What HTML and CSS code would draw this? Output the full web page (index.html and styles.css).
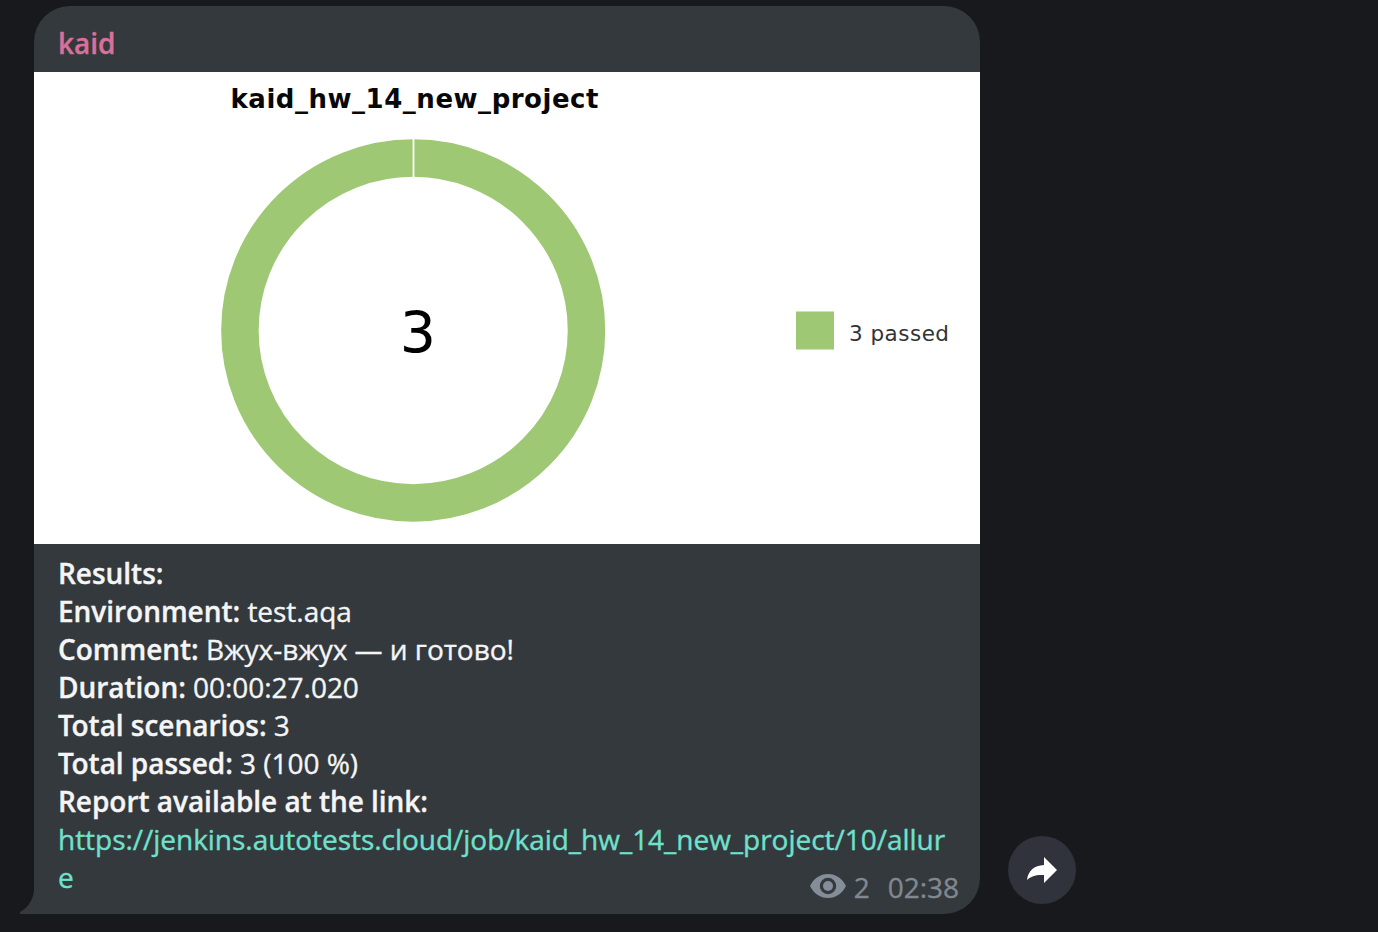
FILE: index.html
```html
<!DOCTYPE html>
<html lang="en">
<head>
<meta charset="utf-8">
<title>kaid</title>
<link rel="stylesheet" href="styles.css">
</head>
<body>
<main class="chat">
  <article class="message">
    <header class="sender">kaid</header>
    <svg class="chart" viewBox="34 72 946 472" role="img" aria-label="3 passed">
      <text class="chart-title" x="230.500" y="107.500" textLength="368">kaid_hw_14_new_project</text>
      <ellipse class="ring" cx="413.200" cy="330.500" rx="173.300" ry="172.400"/>
      <path class="ring-split" d="M413.500 138V178"/>
      <text class="chart-total" x="418" y="352.500">3</text>
      <rect class="swatch" x="796" y="311.500" width="38" height="38"/>
      <text class="legend" x="849" y="341" textLength="100">3 passed</text>
    </svg>
    <div class="body">
      <p><b>Results:</b></p>
      <p><b>Environment:</b> test.aqa</p>
      <p><b>Comment:</b> Вжух-вжух — и готово!</p>
      <p><b>Duration:</b> 00:00:27.020</p>
      <p class="total"><b>Total scenarios:</b> 3</p>
      <p class="total"><b>Total passed:</b> 3 (100 %)</p>
      <p><b>Report available at the link:</b></p>
      <p class="link">https://jenkins.autotests.cloud/job/kaid_hw_14_new_project/10/allure</p>
    </div>
    <div class="meta">
      <svg class="eye" viewBox="0 0 36 24"><path fill-rule="evenodd" d="M18 0C26 0 32.500 4.800 36 12C32.500 19.200 26 24 18 24C10 24 3.500 19.200 0 12C3.500 4.800 10 0 18 0ZM18 3.800A8.200 8.200 0 1 0 18 20.200A8.200 8.200 0 1 0 18 3.800Z"/><circle cx="18" cy="12" r="5"/></svg>
      <span class="views">2</span>
      <time>02:38</time>
    </div>
    <svg class="tail" viewBox="0 0 15 24"><path d="M14 0H15V24H0V22C8 18 13 10 14 0Z"/></svg>
  </article>
  <button class="share" aria-label="Share">
    <svg viewBox="0 0 30 26"><path d="M17 0L30 13L17 26V18C9 17.500 4.500 19 0 23C1 14 7 8.500 17 8Z"/></svg>
  </button>
</main>
</body>
</html>
```
FILE: styles.css
```css
body {
  margin: 0;
  background: #18191d;
  color: #f5f5f5;
  font: 28px/38px "Open Sans", "Noto Sans", sans-serif;
  letter-spacing: -0.03px;
  -webkit-text-stroke: 0.35px currentColor;
}
.chat {
  display: flex;
  align-items: flex-end;
  gap: 28px;
  box-sizing: border-box;
  height: 932px;
  padding: 6px 0 18px 34px;
  overflow: hidden;
}
.message {
  position: relative;
  display: flex;
  flex-direction: column;
  width: 946px;
  height: 908px;
  border-radius: 36px 36px 36px 0;
  background: #33393d;
}
.sender {
  height: 48px;
  padding: 18px 24px 0;
  color: #d8709a;
  font-weight: 600;
}
.chart {
  display: block;
  flex: none;
  width: 946px;
  height: 472px;
  background: #fff;
}
.chart text {
  font-family: "DejaVu Sans", sans-serif;
  letter-spacing: 0;
  -webkit-text-stroke: 0;
}
.chart .chart-title { font-size: 26px; font-weight: bold; fill: #080808; }
.ring { fill: none; stroke: #9fc874; stroke-width: 37.500; }
.ring-split { stroke: #fff; stroke-width: 1.800; }
.chart .chart-total { font-size: 57px; text-anchor: middle; fill: #000; }
.swatch { fill: #9fc874; }
.chart .legend { font-size: 21.500px; fill: #333; }
.body { padding: 10px 24px 0; }
.body p { margin: 0; }
.body b { font-weight: 600; }
.body .total::first-letter { letter-spacing: -2.300px; }
.body .link { color: #70e1cd; word-break: break-all; }
.meta {
  position: absolute;
  right: 21px;
  bottom: 8px;
  display: flex;
  align-items: center;
  color: #82888f;
}
.eye { width: 36px; height: 24px; margin: 0 8px 3px 0; fill: #858e98; }
.views { margin-right: 18px; }
.tail {
  position: absolute;
  left: -14px;
  bottom: 0;
  width: 15px;
  height: 24px;
  fill: #33393d;
}
.share {
  display: grid;
  place-items: center;
  width: 68px;
  height: 68px;
  margin: 0 0 10px;
  padding: 0;
  border: 0;
  border-radius: 50%;
  background: #30333b;
}
.share svg { width: 30px; height: 26px; fill: #fff; }
```
